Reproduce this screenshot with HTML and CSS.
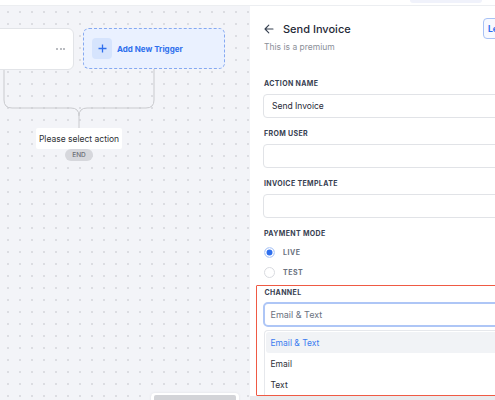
FILE: index.html
```html
<!DOCTYPE html>
<html>
<head>
<meta charset="utf-8">
<link rel="stylesheet" href="styles.css">
</head>
<body>
<div class="topbar"><div class="top-pill"></div></div>
<div class="main">
  <div class="canvas">
    <svg class="connectors" width="250" height="140" viewBox="0 0 250 140">
      <path d="M4 64 V94 Q4 102 12 102 H71 Q79 102 79 110 V122 M79 110 Q79 102 87 102 H146 Q154 102 154 94 V63" fill="none" stroke="#c9cace" stroke-width="1"/>
    </svg>
    <div class="node trigger-card"><span class="dot"></span><span class="dot"></span><span class="dot"></span></div>
    <div class="node add-trigger">
      <span class="plus-box"><svg width="9" height="9" viewBox="0 0 9 9"><path d="M4.5 0.5 V8.5 M0.5 4.5 H8.5" stroke="#2f6fed" stroke-width="1.3" fill="none"/></svg></span>
      <span class="add-text">Add New Trigger</span>
    </div>
    <div class="node select-action">Please select action</div>
    <div class="node end-pill">END</div>
    <div class="node mini-panel"><div class="mini-bar"></div></div>
  </div>
  <aside class="panel">
    <div class="content">
      <div class="header">
        <div class="title-row">
          <svg class="back" width="10" height="10" viewBox="0 0 10 10"><path d="M9 5 H1.2 M4.8 1.2 L1 5 L4.8 8.8" fill="none" stroke="#374151" stroke-width="1.1" stroke-linecap="round" stroke-linejoin="round"/></svg>
          <span class="title">Send Invoice</span>
        </div>
        <div class="learn-btn">Learn more</div>
      </div>
      <div class="subtitle">This is a premium</div>

      <div class="field first">
        <div class="label">ACTION NAME</div>
        <div class="input"><span class="value">Send Invoice</span></div>
      </div>
      <div class="field">
        <div class="label">FROM USER</div>
        <div class="input"></div>
      </div>
      <div class="field">
        <div class="label">INVOICE TEMPLATE</div>
        <div class="input"></div>
      </div>
      <div class="field">
        <div class="label">PAYMENT MODE</div>
        <div class="radios">
          <div class="radio-row"><span class="radio checked"></span><span class="radio-text">LIVE</span></div>
          <div class="radio-row"><span class="radio"></span><span class="radio-text">TEST</span></div>
        </div>
      </div>
      <div class="channel-box">
        <div class="label">CHANNEL</div>
        <div class="select"><span class="placeholder">Email &amp; Text</span></div>
        <div class="dropdown">
          <div class="option active">Email &amp; Text</div>
          <div class="option">Email</div>
          <div class="option">Text</div>
        </div>
      </div>
      <div class="below-strip"></div>
    </div>
  </aside>
</div>
</body>
</html>
```
FILE: styles.css
```css
* { box-sizing: border-box; }
html, body {
  margin: 0;
  padding: 0;
}
body {
  width: 495px;
  height: 400px;
  overflow: hidden;
  font-family: Inter, "Liberation Sans", sans-serif;
  background: #ffffff;
  color: #1f2937;
}
.topbar {
  height: 6px;
  background: #ffffff;
  border-bottom: 1px solid #eceef1;
  display: flex;
  justify-content: flex-end;
  padding-right: 13px;
}
.top-pill {
  width: 72px;
  height: 3px;
  background: #f0f2fb;
  border-radius: 0 0 6px 6px;
}
.main {
  display: flex;
  height: 394px;
}
.canvas {
  position: relative;
  width: 250px;
  flex: none;
  height: 100%;
  overflow: hidden;
  background-color: #f3f4f8;
  background-image: radial-gradient(circle, #dcdde2 0.8px, transparent 1.2px);
  background-size: 12px 12px;
  background-position: 2px 0;
}
.connectors {
  position: absolute;
  left: 0;
  top: 0;
}
.node {
  position: absolute;
}
.trigger-card {
  left: -20px;
  top: 22px;
  width: 94px;
  height: 42px;
  background: #ffffff;
  border: 1px solid #e2e4e8;
  border-radius: 6px;
  display: flex;
  align-items: center;
  justify-content: flex-end;
  gap: 1.5px;
  padding-right: 8px;
}
.dot {
  width: 2px;
  height: 2px;
  border-radius: 50%;
  background: #a3a6ad;
}
.add-trigger {
  left: 83px;
  top: 22px;
  width: 142px;
  height: 41px;
  background: #eaf1ff;
  border: 1px dashed #86a9f1;
  border-radius: 6px;
  display: flex;
  align-items: center;
  gap: 5px;
  padding-left: 8px;
}
.plus-box {
  width: 20px;
  height: 21px;
  border-radius: 4px;
  background: #d6e4fd;
  display: flex;
  align-items: center;
  justify-content: center;
}
.add-text {
  font-size: 8px;
  font-weight: 700;
  color: #2f6fed;
}
.select-action {
  left: 36px;
  top: 122px;
  width: 86px;
  height: 21px;
  background: #ffffff;
  border-radius: 2px;
  display: flex;
  align-items: center;
  justify-content: center;
  font-size: 8.5px;
  color: #2d2f33;
}
.end-pill {
  left: 65px;
  top: 143px;
  width: 28px;
  height: 12px;
  border-radius: 6px;
  background: #d6d7dc;
  color: #6b6e76;
  font-size: 6.5px;
  font-weight: 500;
  display: flex;
  align-items: center;
  justify-content: center;
}
.mini-panel {
  left: 151px;
  top: 387px;
  width: 88px;
  height: 20px;
  background: #ffffff;
  border-radius: 4px;
  box-shadow: 0 0 3px rgba(0,0,0,0.08);
  padding: 2px 3px;
}
.mini-bar {
  height: 10px;
  background: #d3d4d8;
  border-radius: 2px;
}
.panel {
  flex: 1;
  overflow: hidden;
  background: #ffffff;
  padding-left: 13px;
  padding-top: 12px;
}
.content {
  width: 281px;
}
.header {
  height: 21px;
  display: flex;
  align-items: center;
  justify-content: space-between;
}
.title-row {
  display: flex;
  align-items: center;
  gap: 9px;
  padding-left: 1px;
}
.title {
  font-size: 11px;
  font-weight: 500;
  color: #1f2937;
}
.learn-btn {
  width: 61px;
  height: 21px;
  border: 1px solid #a8c2f5;
  border-radius: 4px;
  background: #f7f9ff;
  color: #2f6fed;
  font-size: 8.5px;
  font-weight: 700;
  display: flex;
  align-items: center;
  padding-left: 4px;
}
.subtitle {
  margin-top: 2px;
  line-height: 12px;
  font-size: 8.5px;
  color: #8b9099;
  padding-left: 1px;
}
.field {
  margin-top: 11px;
}
.field.first {
  margin-top: 26px;
}
.label {
  font-size: 7px;
  font-weight: 700;
  line-height: 10px;
  letter-spacing: 0.35px;
  color: #374151;
  padding-left: 1px;
}
.input {
  margin-top: 5px;
  height: 24px;
  border: 1px solid #e1e3e7;
  border-radius: 4px;
  display: flex;
  align-items: center;
  padding-left: 8px;
}
.value {
  font-size: 8.5px;
  color: #1f2937;
}
.radios {
  margin-top: 6px;
  display: flex;
  flex-direction: column;
  gap: 6px;
}
.radio-row {
  height: 14px;
  display: flex;
  align-items: center;
  gap: 8px;
  padding-left: 1px;
}
.radio {
  width: 11px;
  height: 11px;
  border-radius: 50%;
  border: 1px solid #d9dbe0;
  background: #ffffff;
}
.radio.checked {
  border: 1.5px solid #b9cff9;
  background: #2f6fed;
  box-shadow: inset 0 0 0 1.5px #ffffff;
  background-clip: padding-box;
}
.radio-text {
  font-size: 7px;
  font-weight: 700;
  letter-spacing: 0.5px;
  color: #6b7280;
}
.channel-box {
  margin-top: 6px;
  margin-left: -7px;
  width: 300px;
  border: 1.5px solid #ef5a44;
  border-radius: 1px;
  padding: 2px 0 0 5.5px;
}
.channel-box .label {
  padding-left: 2px;
}
.select {
  margin-top: 4px;
  height: 25px;
  border: 2px solid #aec6f6;
  border-radius: 5px;
  display: flex;
  align-items: center;
  padding-left: 6px;
}
.placeholder {
  font-size: 9px;
  color: #6b7280;
}
.dropdown {
  margin-top: 3px;
  margin-left: 1px;
  border: 1px solid #e6e8ec;
  border-bottom: none;
  border-radius: 4px 0 0 0;
  padding: 1px 0 0 1px;
}
.option {
  height: 21px;
  display: flex;
  align-items: center;
  padding-left: 5px;
  font-size: 8.5px;
  color: #2d3038;
}
.option.active {
  background: #f1f3f6;
  color: #3b7cf0;
  border-radius: 3px 0 0 3px;
}
.below-strip {
  margin-left: -13px;
  height: 4px;
  background: #e9eaed;
}
```
